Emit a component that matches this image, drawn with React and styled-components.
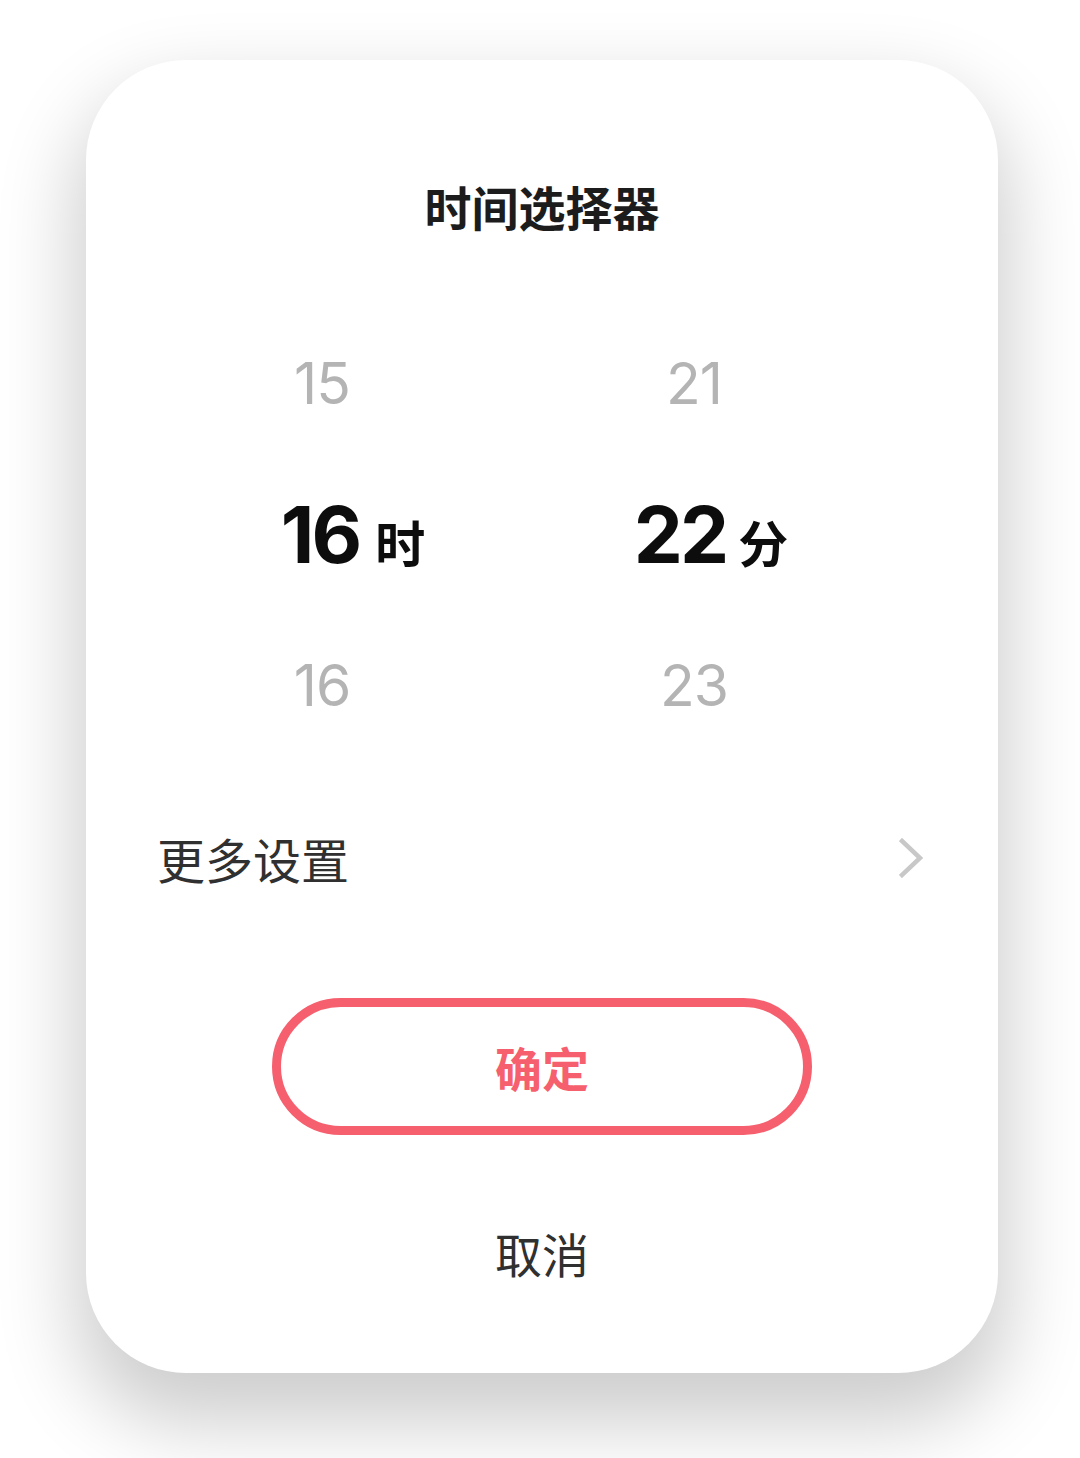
import React from "react";
import styled, { createGlobalStyle } from "styled-components";

const Global = createGlobalStyle`
  html, body { margin: 0; padding: 0; background: #ffffff; }
  body { font-family: "Noto Sans CJK SC", "Noto Sans", sans-serif; }
  * { box-sizing: border-box; }
`;

const Page = styled.div`
  width: 1080px;
  height: 1458px;
  padding: 60px 82px 0 86px;
  overflow: hidden;
`;

const Card = styled.div`
  width: 912px;
  height: 1313px;
  background: #ffffff;
  border-radius: 100px;
  box-shadow: 0 40px 80px 10px rgba(0, 0, 0, 0.2);
  display: flex;
  flex-direction: column;
  align-items: stretch;
  padding-top: 116px;
`;

const Title = styled.h1`
  margin: 0;
  height: 60px;
  line-height: 60px;
  text-align: center;
  font-size: 47px;
  font-weight: 700;
  color: #1c1c1c;
  font-family: "Noto Sans CJK SC", sans-serif;
`;

const Picker = styled.div`
  margin-top: 72px;
  padding-left: 50px;
  display: grid;
  grid-template-columns: 372px 372px;
`;

const Column = styled.div`
  display: flex;
  flex-direction: column;
  align-items: center;
`;

const Cell = styled.div`
  height: 151px;
  display: flex;
  align-items: center;
  justify-content: center;
  padding-left: ${(p) => p.$lead || 0}px;
`;

const Faded = styled.span`
  font-family: Inter, "Noto Sans", sans-serif;
  font-size: 57px;
  font-weight: 400;
  color: #b4b4b4;
  line-height: 1;
  letter-spacing: -1px;
`;

const Picked = styled.span`
  font-family: Inter, "Noto Sans", sans-serif;
  font-size: 78px;
  font-weight: 700;
  color: #0d0d0d;
  line-height: 1;
  letter-spacing: -3px;
`;

const Unit = styled.span`
  font-family: "Noto Sans CJK SC", sans-serif;
  font-size: 50px;
  font-weight: 700;
  color: #0d0d0d;
  margin-left: ${(p) => p.$gap}px;
  margin-top: 12px;
  line-height: 1;
`;

const MoreRow = styled.div`
  margin-top: 57px;
  height: 80px;
  padding: 0 75px 0 71px;
  display: flex;
  align-items: center;
  justify-content: space-between;
`;

const MoreLabel = styled.span`
  font-size: 48px;
  font-weight: 400;
  color: #303030;
  line-height: 1;
`;

const Chevron = styled.svg`
  width: 24px;
  height: 40px;
  display: block;
`;

const ConfirmButton = styled.button`
  align-self: center;
  margin-top: 100px;
  width: 540px;
  height: 137px;
  border: 9px solid #f65f6d;
  border-radius: 70px;
  background: #ffffff;
  color: #f65f6d;
  font-family: "Noto Sans CJK SC", sans-serif;
  font-size: 47px;
  font-weight: 700;
  display: flex;
  align-items: center;
  justify-content: center;
  padding: 0;
`;

const CancelButton = styled.button`
  align-self: center;
  margin-top: 88px;
  height: 60px;
  border: none;
  background: transparent;
  color: #303030;
  font-family: "Noto Sans CJK SC", sans-serif;
  font-size: 47px;
  font-weight: 400;
  line-height: 60px;
  padding: 0;
`;

const columns = [
  { prev: "15", current: "16", next: "16", unit: "时", lead: 62, gap: 16 },
  { prev: "21", current: "22", next: "23", unit: "分", lead: 34, gap: 12 },
];

export default function App() {
  return (
    <>
      <Global />
      <Page>
        <Card>
          <Title>时间选择器</Title>
          <Picker>
            {columns.map((c) => (
              <Column key={c.unit}>
                <Cell>
                  <Faded>{c.prev}</Faded>
                </Cell>
                <Cell $lead={c.lead}>
                  <Picked>{c.current}</Picked>
                  <Unit $gap={c.gap}>{c.unit}</Unit>
                </Cell>
                <Cell>
                  <Faded>{c.next}</Faded>
                </Cell>
              </Column>
            ))}
          </Picker>
          <MoreRow>
            <MoreLabel>更多设置</MoreLabel>
            <Chevron viewBox="0 0 24 40">
              <polyline
                points="3,3 21,20 3,37"
                fill="none"
                stroke="#c8c8c8"
                strokeWidth="4.5"
                strokeLinecap="square"
                strokeLinejoin="miter"
              />
            </Chevron>
          </MoreRow>
          <ConfirmButton>确定</ConfirmButton>
          <CancelButton>取消</CancelButton>
        </Card>
      </Page>
    </>
  );
}
